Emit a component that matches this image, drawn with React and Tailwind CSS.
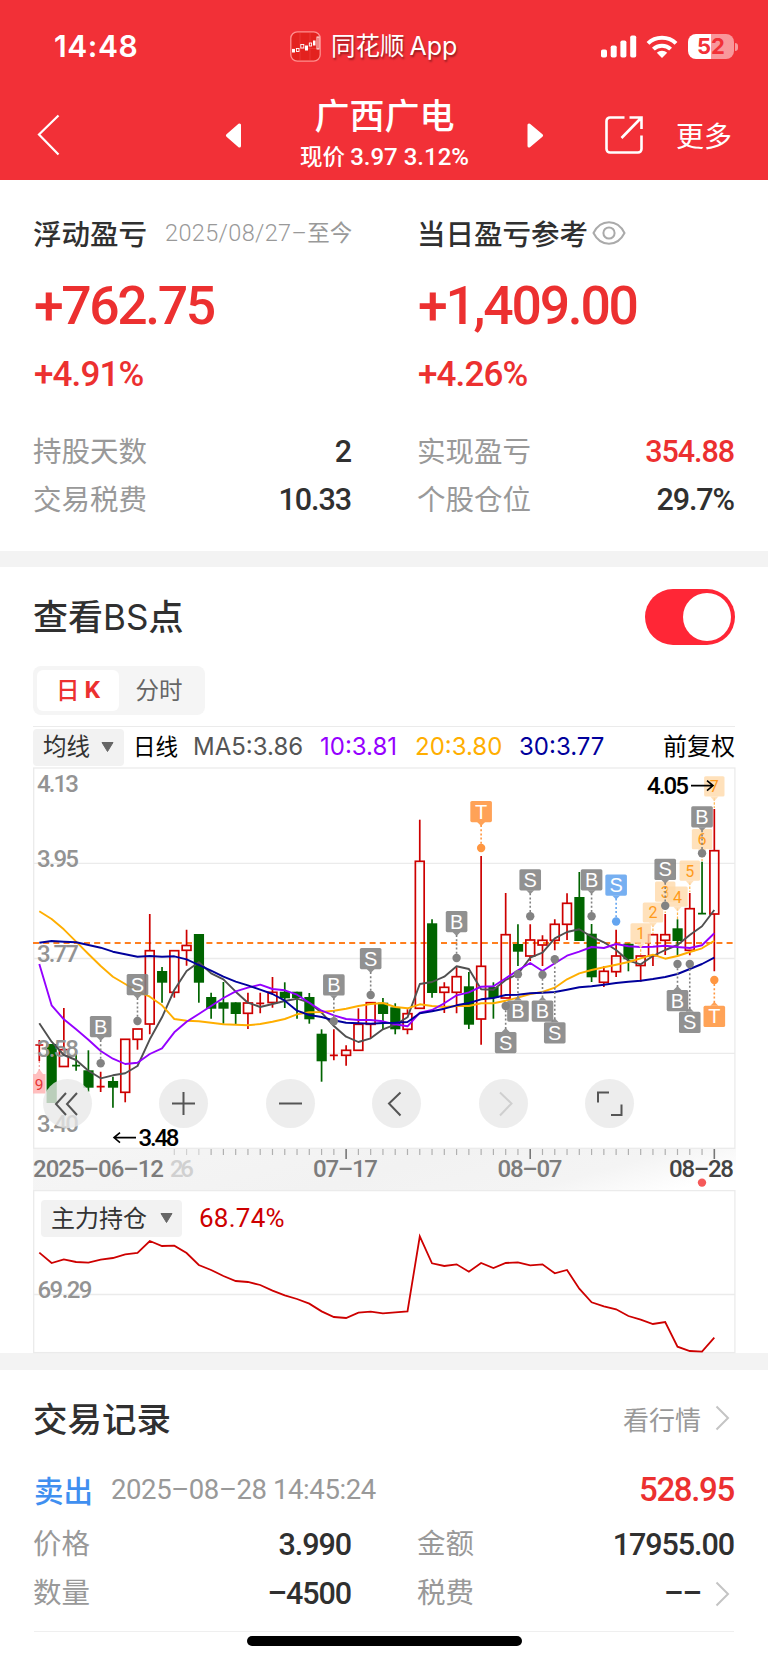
import clsx from 'clsx';

const FIRST_X = 39.3;
const STEP = 12.273;
const xAt = (i) => FIRST_X + STEP * i;

// [high, body top, body bottom, low, 'r' rise | 'g' fall]
const candles = [
  [1040, 1045, 1045, 1061, 'r'],
  [1044, 1044, 1103, 1103, 'g'],
  [1008, 1049.7, 1066.5, 1066.5, 'r'],
  [1051, 1065.7, 1065.7, 1070.7, 'g'],
  [1050.3, 1070.3, 1087.7, 1091.7, 'g'],
  [1071.7, 1086.7, 1086.7, 1092, 'r'],
  [1076.7, 1081, 1087.7, 1107.7, 'g'],
  [1039.3, 1039.3, 1092.3, 1102.3, 'r'],
  [1029, 1029, 1039.3, 1049.7, 'r'],
  [914, 950.7, 1024, 1034.3, 'r'],
  [967, 971, 982.7, 1002.7, 'g'],
  [950.7, 950.7, 992.3, 997.7, 'r'],
  [929.7, 945.5, 950.3, 965.7, 'r'],
  [934, 934, 982.7, 1002.7, 'g'],
  [992.7, 997, 1008.7, 1018.7, 'g'],
  [982, 1002.3, 1008.7, 1023.7, 'g'],
  [1002.3, 1002.3, 1014, 1024, 'g'],
  [992.7, 1003, 1013.3, 1029, 'r'],
  [992.7, 1003.3, 1003.3, 1013.3, 'r'],
  [977, 992.3, 1002.5, 1007.7, 'r'],
  [982.3, 991.7, 998.3, 1008, 'g'],
  [991.7, 991.7, 998, 1018.7, 'g'],
  [993, 997, 1019.3, 1023.7, 'g'],
  [1029.3, 1033.7, 1061.3, 1081.7, 'g'],
  [1029.3, 1055.3, 1055.3, 1060.3, 'r'],
  [1045.3, 1050.3, 1055.3, 1065.7, 'r'],
  [1008.3, 1024.3, 1050.3, 1050.3, 'r'],
  [1002.7, 1002.7, 1024.3, 1038.3, 'r'],
  [998, 1002.7, 1014, 1029.3, 'g'],
  [1003.3, 1007.3, 1029.3, 1034.3, 'g'],
  [1009.3, 1013.7, 1029.3, 1034.3, 'r'],
  [819.7, 861.3, 1008.3, 1008.3, 'r'],
  [919.3, 923.3, 993, 997.7, 'g'],
  [982.3, 987.3, 992.3, 1013, 'r'],
  [967.3, 976.7, 992.3, 1013.3, 'r'],
  [972, 986.3, 1024.7, 1029, 'g'],
  [856, 966.3, 1019, 1044.7, 'r'],
  [982.3, 987, 998, 1018.7, 'g'],
  [893, 934.7, 998, 998, 'r'],
  [924.3, 944, 951.7, 966, 'g'],
  [924.3, 940, 956, 961, 'r'],
  [935.3, 940.3, 945, 966, 'r'],
  [919.3, 924.3, 940.3, 950.3, 'r'],
  [893.3, 903.3, 924.3, 940, 'r'],
  [872, 897, 941, 941, 'g'],
  [924, 933.7, 977.3, 982, 'g'],
  [966.3, 971.3, 982.3, 987, 'r'],
  [929.7, 956, 971.7, 977, 'r'],
  [943.7, 943.7, 959.3, 971.3, 'g'],
  [956, 956, 965.5, 981.7, 'r'],
  [934.7, 934.7, 955.7, 966, 'r'],
  [914, 934.7, 940.3, 955, 'r'],
  [919.3, 928.3, 941, 955, 'g'],
  [893, 908.7, 950.3, 955.3, 'r'],
  [861.7, 913.7, 913.7, 913.7, 'g'],
  [809, 850.7, 914, 971.3, 'r'],
];

const averages = [
  {
    name: 'MA5',
    color: '#505050',
    values: [1023.3, 1041.7, 1055, 1060, 1070.7, 1078.3, 1075.3, 1073.3, 1066, 1039.3, 1017.3, 990, 971, 962.3, 973.3, 979.3, 991.7, 1002.7, 1007, 1004, 1001, 998.7, 1002.7, 1012.7, 1026, 1036.7, 1042, 1038.3, 1029.3, 1024.7, 1017.3, 984, 982, 976.7, 966.3, 969, 989.3, 989.7, 980, 974, 957.7, 952.7, 938.3, 932, 929.3, 936.7, 942.3, 950, 960.7, 964.3, 956, 950, 945, 935, 926.3, 910],
  },
  {
    name: 'MA20',
    color: '#ffae00',
    values: [911.3, 919, 929.3, 941.7, 954, 966, 976.7, 984, 991.3, 996.7, 1005.3, 1019, 1020.7, 1021.3, 1022.7, 1024.3, 1024.7, 1025.3, 1024, 1021.7, 1019, 1014.3, 1012.3, 1012, 1010.7, 1008.7, 1006, 1004, 1003, 1007, 1008.3, 1004.3, 1006, 1007, 1006, 1006, 1003.3, 1003.3, 1000.7, 997.7, 994, 992, 987.7, 979.3, 973.3, 970, 967.3, 964.7, 962, 958.3, 954.7, 958.7, 956, 952, 948.3, 940.7],
  },
  {
    name: 'MA10',
    color: '#9500ff',
    values: [964, 1005.3, 1019.3, 1029.3, 1039.7, 1051, 1058.7, 1064, 1062.7, 1054, 1048.3, 1032.3, 1021.7, 1014, 1006, 998, 991.3, 987.7, 984.7, 989, 990.3, 994.7, 1002.7, 1010.7, 1015.3, 1019, 1020, 1020, 1021.3, 1024.3, 1026.3, 1012.7, 1010, 1003.3, 995.3, 992.3, 986.7, 986.3, 978.3, 970.3, 963, 971, 963.3, 955.7, 951.7, 947, 948, 944, 946.3, 947, 946.7, 945.7, 947, 948, 945.3, 933.3],
  },
  {
    name: 'MA30',
    color: '#00009c',
    values: [942.7, 941, 941.7, 942.3, 945, 947.7, 951.7, 954.3, 956.7, 956, 956.7, 956.3, 959.3, 965, 970.7, 976.7, 981.7, 985.3, 989.7, 994, 1000.7, 1010.7, 1015, 1017, 1020.3, 1022.7, 1023.3, 1023.7, 1023, 1022.7, 1022, 1013.3, 1011.3, 1008.7, 1005.3, 1003, 999.3, 998, 995, 994.7, 993.3, 992.7, 992, 989.7, 987.3, 986.3, 984.7, 983, 981.7, 980.7, 979, 977, 974, 969, 964, 957.7],
  },
];

const GRAY = '#828282';
const ORANGE = '#ff9640';
const BLUE = '#64a5f0';

// i: candle index, y: top of the badge, dot: centre of the anchor dot
const marks = [
  { i: 5, label: 'B', y: 1016, dot: 1063.3 },
  { i: 8, label: 'S', y: 974, dot: 1021 },
  { i: 24, label: 'B', y: 974.3, dot: 1021.3 },
  { i: 27, label: 'S', y: 948, dot: 995 },
  { i: 34, label: 'B', y: 911, dot: 958 },
  { i: 36, label: 'T', y: 801, dot: 848, color: ORANGE },
  { i: 38, label: 'S', y: 1032, dot: 1006 },
  { i: 39, label: 'B', y: 1000.5, dot: 974.3 },
  { i: 40, label: 'S', y: 869.2, dot: 916.3 },
  { i: 41, label: 'B', y: 1000.5, dot: 974.8 },
  { i: 42, label: 'S', y: 1022.2, dot: 959.3 },
  { i: 45, label: 'B', y: 869.2, dot: 916.3 },
  { i: 47, label: 'S', y: 874.5, dot: 921.5, color: BLUE },
  { i: 51, label: 'S', y: 858.8, dot: 905.7 },
  { i: 52, label: 'B', y: 990, dot: 964 },
  { i: 53, label: 'S', y: 1011.8, dot: 964 },
  { i: 54, label: 'B', y: 806.2, dot: 853.3 },
  { i: 55, label: 'T', y: 1005.8, dot: 980, color: ORANGE },
];

const counts = [
  { i: 49, n: 1, y: 923.2, to: 955 },
  { i: 50, n: 2, y: 902.4, to: 934 },
  { i: 51, n: 3, y: 881.6, to: 913 },
  { i: 52, n: 4, y: 886.6, to: 919 },
  { i: 53, n: 5, y: 860.6, to: 892 },
  { i: 54, n: 6, y: 829, to: 861 },
  { i: 55, n: 7, y: 776.2, to: 808 },
];

const holdings = [248, 279, 268, 276, 278, 269, 264, 253, 249, 213, 228, 227, 249, 285, 300, 318, 333, 336, 345, 362, 376, 387, 401, 424, 441, 444, 428, 425, 430, 427, 424, 199, 280, 288, 283, 305, 279, 294, 279, 277, 286, 283, 310, 300, 356, 397, 409, 418, 438, 449, 462, 456, 530, 543, 545, 503];

const toPoints = (values) => values.map((v, i) => `${xAt(i).toFixed(1)},${v}`).join(' ');

function Candle({ index, data }) {
  const [high, top, bottom, low, kind] = data;
  const x = xAt(index);
  const color = kind === 'r' ? '#cd0000' : '#006400';

  if (top === bottom) {
    return (
      <g stroke={color} strokeWidth="1.7">
        <path d={`M${x} ${high}V${low}M${x - 4} ${top}H${x + 4}`} />
      </g>
    );
  }
  if (kind === 'g') {
    return (
      <g>
        <path d={`M${x} ${high}V${low}`} stroke={color} strokeWidth="1.7" />
        <rect x={x - 5} y={top} width="10.2" height={bottom - top} fill={color} />
      </g>
    );
  }
  return (
    <g stroke={color} strokeWidth="1.7" fill="none">
      <path d={`M${x} ${high}V${top}M${x} ${bottom}V${low}`} />
      <rect x={x - 4.4} y={top} width="8.8" height={bottom - top} />
    </g>
  );
}

function Mark({ i, label, y, dot, color = GRAY }) {
  const x = xAt(i);
  const above = dot > y;
  const edge = above ? y + 21 : y;
  const tip = above ? edge + 3 : edge - 3;
  return (
    <g>
      <path d={`M${x} ${tip}V${dot}`} stroke={color} strokeWidth="1.6" strokeDasharray="2 2.2" />
      <circle cx={x} cy={dot} r="4.2" fill={color} />
      <g opacity="0.88">
        <rect x={x - 10.8} y={y} width="21.6" height="21.2" rx="1.6" fill={color} />
        <path d={`M${x - 4} ${edge}L${x} ${tip + (above ? 1 : -1)}L${x + 4} ${edge}Z`} fill={color} />
      </g>
      <text x={x} y={y + 17.6} textAnchor="middle" fontSize="20" fill="#fff">
        {label}
      </text>
    </g>
  );
}

function Count({ i, n, y, to }) {
  const x = xAt(i);
  return (
    <g>
      <path d={`M${x} ${y + 22}V${to}`} stroke="#ffb44c" strokeWidth="1.2" strokeDasharray="2.5 1.5" />
      <rect x={x - 10.2} y={y} width="20.4" height="20.2" rx="1.5" fill="#ffd9a8" opacity="0.78" />
      <path d={`M${x - 4} ${y + 20.2}L${x} ${y + 25}L${x + 4} ${y + 20.2}Z`} fill="#ffd9a8" opacity="0.78" />
      <text x={x} y={y + 16} textAnchor="middle" fontSize="16" fill="#ff9a1a" className="font-[Roboto]">
        {n}
      </text>
    </g>
  );
}

function ToolButton({ children, muted }) {
  return (
    <button className="flex size-[49px] items-center justify-center rounded-full bg-[#e8e8e8]/80 first:mr-[10px]">
      <svg
        width="49"
        height="49"
        viewBox="0 0 49 49"
        fill="none"
        strokeWidth="2"
        className={muted ? 'stroke-[#cfcfcf]' : 'stroke-[#555]'}
      >
        {children}
      </svg>
    </button>
  );
}

function KLineChart() {
  return (
    <div className="relative h-[382px]">
      <svg
        width="703"
        height="382"
        viewBox="33 767 703 382"
        className="block overflow-visible font-['Liberation_Sans']"
      >
        <g stroke="#ebebeb" strokeWidth="1.3" fill="none">
          <rect x="33.7" y="768" width="701.2" height="380.3" />
          <path d="M34 863.3H735M34 958.5H735M34 1053.4H735" />
        </g>
        <path d="M33 943H735" stroke="#ff7f1e" strokeWidth="2" strokeDasharray="6 4.2" />
        {candles.map((data, i) => (
          <Candle key={i} index={i} data={data} />
        ))}
        <g fontSize="24" fill="#939393" fontWeight="500" className="font-[Roboto]">
          <text x="37" y="792" textLength="42">4.13</text>
          <text x="37" y="866.6" textLength="42">3.95</text>
          <text x="37" y="962" textLength="42">3.77</text>
          <text x="37" y="1057" textLength="42">3.58</text>
          <text x="37" y="1132" textLength="42">3.40</text>
        </g>
        <path d="M39.3 1061V1072" stroke="#f29a9a" strokeWidth="1.2" strokeDasharray="2 2" />
        <path d="M33 1074H45.5V1093.4H33ZM36 1074L39.3 1069L43 1074Z" fill="#ffb4b4" opacity="0.85" />
        <text x="39" y="1090" textAnchor="middle" fontSize="15.5" fill="#e83434" className="font-[Roboto]">9</text>
        {averages.map((line) => (
          <polyline
            key={line.name}
            points={toPoints(line.values)}
            fill="none"
            stroke={line.color}
            strokeWidth="1.9"
            strokeLinejoin="round"
          />
        ))}
        {counts.map((count) => (
          <Count key={count.n} {...count} />
        ))}
        {marks.map((mark) => (
          <Mark key={mark.i} {...mark} />
        ))}
        <g fontSize="24" fontWeight="500" fill="#000" className="font-[Roboto]">
          <text x="647" y="794" textLength="42">4.05</text>
          <text x="138.5" y="1145.6" textLength="41">3.48</text>
        </g>
        <g stroke="#000" strokeWidth="1.6" fill="none">
          <path d="M691 785.6H713M707 780.6L713 785.6L707 790.6" />
          <path d="M136 1137.6H114M120 1132.6L114 1137.6L120 1142.6" />
        </g>
      </svg>
      <div className="absolute top-[312px] left-[10px] flex gap-[57.4px]">
        <ToolButton>
          <path d="M23 14L13 25L23 36M34 14L24 25L34 36" />
        </ToolButton>
        <ToolButton>
          <path d="M13 24.5H36M24.5 13V36" />
        </ToolButton>
        <ToolButton>
          <path d="M13 24.5H36" />
        </ToolButton>
        <ToolButton>
          <path d="M28.5 13.5L17 24.5L28.5 36.5" />
        </ToolButton>
        <ToolButton muted>
          <path d="M21 13.5L32.5 24.5L21 36.5" />
        </ToolButton>
        <ToolButton>
          <path d="M13 23.5V13.500H24M26 36H36.5V25.5" />
        </ToolButton>
      </div>
    </div>
  );
}

function DateAxis() {
  const ticks = Array.from({ length: 45 }, (_, k) => k + 11);
  return (
    <svg width="703" height="41" viewBox="33 1149 703 41" className="block font-[Roboto]">
      <defs>
        <linearGradient id="axis" x1="0" x2="1" y1="0.4" y2="0.6">
          <stop offset="0" stopColor="#f5f5f5" />
          <stop offset="0.5" stopColor="#f2f2f2" />
          <stop offset="0.8" stopColor="#f4f4f4" />
          <stop offset="1" stopColor="#fff" />
        </linearGradient>
      </defs>
      <rect x="33" y="1149" width="703" height="41" fill="url(#axis)" />
      {ticks.map((i) => (
        <path
          key={i}
          d={`M${xAt(i)} 1149V${i % 15 === 10 ? 1159 : 1155}`}
          stroke={i % 15 === 10 ? '#777' : i < 14 ? '#d0d0d0' : '#b0b0b0'}
          strokeWidth={i % 15 === 10 ? 1.6 : 1.2}
        />
      ))}
      <g fontSize="24" fontWeight="500" fill="#7c7c7c">
        <text x="33" y="1176.500" textLength="131">2025–06–12</text>
        <text x="170" y="1176.500" textLength="24" fill="#d0d0d0">26</text>
        <text x="313" y="1176.500" textLength="65">07–17</text>
        <text x="497.5" y="1176.500" textLength="65">08–07</text>
        <text x="669" y="1176.500" textLength="65" fill="#444">08–28</text>
      </g>
      <circle cx="702" cy="1182.6" r="4.2" fill="#f55a5a" />
    </svg>
  );
}

function HoldingChart() {
  return (
    <div className="relative h-[164px]">
      <svg width="703" height="164" viewBox="33 1190 703 164" className="block">
        <g stroke="#ebebeb" strokeWidth="1.3" fill="none">
          <rect x="33.7" y="1190.6" width="701.2" height="162" />
          <path d="M34 1294.5H735" />
        </g>
        <text x="37.5" y="1297.6" fontSize="24" fontWeight="500" fill="#939393" textLength="55" className="font-[Roboto]">
          69.29
        </text>
        <polyline
          points={toPoints(holdings.map((v) => 1170 + v / 3))}
          fill="none"
          stroke="#cd0000"
          strokeWidth="1.8"
        />
      </svg>
      <div className="absolute top-2 left-2 flex items-center">
        <div className="flex h-[37px] w-[141px] items-center justify-between rounded bg-[#f2f2f2] pr-[9px] pl-[10px] text-[24px] text-[#333]">
          <span className="mb-[2px]">主力持仓</span>
          <Caret />
        </div>
        <span className="mt-px ml-[17px] font-[Roboto] text-[26px] tracking-[0.01em] text-[#cd0000]">68.74%</span>
      </div>
    </div>
  );
}

function Caret() {
  return (
    <svg width="13" height="10" viewBox="0 0 13 10">
      <path d="M1 0.5H12L6.5 9.5Z" fill="#666" stroke="#666" strokeLinejoin="round" />
    </svg>
  );
}

function Chevron() {
  return (
    <svg width="15" height="26" viewBox="0 0 15 26" fill="none" stroke="#c4c4c4" strokeWidth="2">
      <path d="M1.5 1.5L13 13L1.5 24.5" />
    </svg>
  );
}

function Row({ label, value, red, chevron }) {
  return (
    <div className="flex h-full items-center justify-between">
      <span className="mb-[4px] -ml-px text-[28.5px] text-[#999]">{label}</span>
      <span className="flex items-center gap-[14px]">
        <span
          className={clsx(
            'font-[Roboto] text-[30.5px] font-medium tracking-[-0.035em]',
            red ? 'text-[#ec3030]' : 'text-[#303030]',
          )}
        >
          {value}
        </span>
        {chevron && (
          <span className="mr-[4px]">
            <Chevron />
          </span>
        )}
      </span>
    </div>
  );
}

function AppIcon() {
  return (
    <svg width="31" height="31" viewBox="0 0 31 31" fill="none">
      <rect x="0.8" y="0.8" width="29.4" height="29.4" rx="6.5" fill="#e3221f" stroke="#ff8f8f" strokeWidth="1.3" />
      <path d="M2 17.5H29M10 2V29M20 2V29" stroke="#f04a48" strokeWidth="0.5" />
      <g fill="#fff">
        <rect x="2" y="18" width="3" height="3.5" />
        <rect x="15" y="14.5" width="3" height="5" />
        <rect x="23" y="9.5" width="2.5" height="5" />
      </g>
      <g stroke="#fff" strokeWidth="0.9">
        <rect x="6.5" y="17.5" width="2.5" height="3" />
        <rect x="10.8" y="13.5" width="3" height="3.5" />
        <rect x="19.3" y="12" width="2.3" height="3" />
        <rect x="27" y="6" width="2" height="12" />
      </g>
    </svg>
  );
}

function StatusBar() {
  return (
    <div className="flex h-24 items-center justify-between pr-[30px] pb-[3px] pl-[54px]">
      <span className="w-[236px] font-[Inter] text-[30px] font-semibold tracking-[0.02em]">14:48</span>
      <div className="flex flex-1 items-center gap-[10px]">
        <AppIcon />
        <span className="text-[24.5px] text-shadow-[1px_2px_2px_rgb(0_0_0/0.4)]">
          同花顺<span className="ml-[5px] font-[Inter] text-[25px]">App</span>
        </span>
      </div>
      <div className="flex items-center">
        <svg width="36" height="23" viewBox="0 0 36 23" fill="#fff">
          <rect x="0" y="14.5" width="6" height="8" rx="1.8" />
          <rect x="9.7" y="10.5" width="6" height="12" rx="1.8" />
          <rect x="19.4" y="5.5" width="6" height="17" rx="1.8" />
          <rect x="29.2" y="0.5" width="6" height="22" rx="1.8" />
        </svg>
        <svg width="32" height="24" viewBox="0 0 32 24" fill="none" stroke="#fff" strokeWidth="4" className="ml-[9px]">
          <path d="M2 8.4C9.5 0.8 22.5 0.8 30 8.4" />
          <path d="M7.4 14.2C12 9.6 20 9.6 24.6 14.2" />
          <path d="M16 23L10.8 17.8C13.6 15 18.4 15 21.2 17.8Z" fill="#fff" stroke="none" />
        </svg>
        <div className="ml-[10px] flex h-[25px] w-[46px] items-center justify-center rounded-[8px] bg-linear-to-r from-white from-51% to-white/50 to-51% font-[Inter] text-[22px] font-bold text-[#f23037]">
          52
        </div>
        <div className="ml-px h-[8px] w-[3px] rounded-r-full bg-white/50" />
      </div>
    </div>
  );
}

function NavBar() {
  return (
    <div className="flex h-[84px] items-center">
      <svg width="24" height="42" viewBox="0 0 24 42" fill="none" stroke="#fff" strokeWidth="2.2" className="ml-[36px] mb-[6px]">
        <path d="M22.5 1.5L3 20.5L22.5 40.5" />
      </svg>
      <svg width="17" height="25" viewBox="0 0 17 25" className="ml-[165px] mb-[6px]">
        <path d="M14.5 2V23L2.5 12.5Z" fill="#fff" stroke="#fff" strokeWidth="3" strokeLinejoin="round" />
      </svg>
      <div className="mb-[6px] flex w-[285px] flex-col items-center">
        <span className="text-[35px] leading-[42px] font-medium">广西广电</span>
        <span className="text-[22.5px] leading-[40px] font-medium">
          现价 <span className="font-[Roboto] text-[24px]">3.97 3.12%</span>
        </span>
      </div>
      <svg width="17" height="25" viewBox="0 0 17 25" className="mb-[6px]">
        <path d="M2 2V23L14.5 12.5Z" fill="#fff" stroke="#fff" strokeWidth="3" strokeLinejoin="round" />
      </svg>
      <svg width="38" height="38" viewBox="0 0 38 38" fill="none" stroke="#fff" strokeWidth="2.6" className="ml-[61px] mb-[6px]">
        <path d="M19.5 1.5H5A3.5 3.5 0 0 0 1.5 5V33A3.5 3.5 0 0 0 5 36.5H33A3.5 3.5 0 0 0 36.5 33V19.5" />
        <path d="M24.5 1.5H36.5V13M36 2L16.5 22" />
      </svg>
      <span className="mb-[6px] ml-[33px] text-[28px]">更多</span>
    </div>
  );
}

function ProfitSummary() {
  return (
    <section className="grid h-[371px] grid-cols-[317px_316px] justify-between gap-x-[67px] px-[34px] pt-[29px] whitespace-nowrap text-[#303030]">
      <div>
        <div className="flex h-12 items-center">
          <span className="-ml-px text-[28.5px] font-medium">浮动盈亏</span>
          <span className="ml-[18px] text-[22.5px] text-[#999]">
            <span className="font-[Roboto] text-[23.5px] font-light tracking-[0.015em]">2025/08/27–</span>至今
          </span>
        </div>
        <div className="flex h-[98px] items-center font-[Roboto] text-[53.5px] font-medium tracking-[-0.045em] text-[#ec3030]">+762.75</div>
        <div className="flex h-[40px] items-center font-[Roboto] text-[35px] font-medium tracking-[-0.025em] text-[#ec3030]">+4.91%</div>
        <div className="mt-[33px] h-12">
          <Row label="持股天数" value="2" />
        </div>
        <div className="h-12">
          <Row label="交易税费" value="10.33" />
        </div>
      </div>
      <div>
        <div className="flex h-12 items-center">
          <span className="-ml-px text-[28.5px] font-medium">当日盈亏参考</span>
          <svg width="34" height="24" viewBox="0 0 34 24" fill="none" stroke="#aaa" strokeWidth="2" className="ml-[4px]">
            <path d="M1.5 12C5 5 10.5 1.3 17 1.3S29 5 32.5 12C29 19 23.5 22.7 17 22.7S5 19 1.5 12Z" />
            <circle cx="17" cy="12" r="5.6" />
          </svg>
        </div>
        <div className="flex h-[98px] items-center font-[Roboto] text-[53.5px] font-medium tracking-[-0.042em] text-[#ec3030]">+1,409.00</div>
        <div className="flex h-[40px] items-center font-[Roboto] text-[35px] font-medium tracking-[-0.025em] text-[#ec3030]">+4.26%</div>
        <div className="mt-[33px] h-12">
          <Row label="实现盈亏" value="354.88" red />
        </div>
        <div className="h-12">
          <Row label="个股仓位" value="29.7%" />
        </div>
      </div>
    </section>
  );
}

function ChartSection() {
  return (
    <section className="h-[786px] pl-[33px] text-[#303030]">
      <div className="flex h-[99px] items-center justify-between pr-[33px]">
        <h2 className="text-[35px] font-medium">
          查看<span className="font-[Inter] font-normal">BS</span>点
        </h2>
        <div className="flex h-14 w-[90px] items-center justify-end rounded-[28px] bg-[#ff2636] pr-1">
          <span className="size-12 rounded-full bg-white" />
        </div>
      </div>
      <div className="flex h-[49px] w-[172px] items-center rounded-lg bg-[#f5f5f5] p-1 text-[23.5px]">
        <span className="flex h-full w-[82px] items-center justify-center gap-[5px] rounded-md bg-white pb-px font-medium text-[#ec3030]">
          日<span className="font-[Roboto] text-[24.5px] font-bold">K</span>
        </span>
        <span className="flex-1 pr-[2px] pb-[2px] text-center text-[#666]">分时</span>
      </div>
      <div className="mt-[11px] mr-[33px] flex h-[41px] items-center border-t border-[#ebebeb] font-[Inter,'Noto_Sans_CJK_SC',sans-serif] text-[24px] whitespace-nowrap text-black">
        <span className="flex h-[37px] w-[91px] items-center justify-between rounded bg-[#f2f2f2] pr-[10px] pl-[10px] text-[23.5px] text-[#333]">
          均线
          <Caret />
        </span>
        <span className="ml-[9px] w-[60px] text-[22.5px]">日线</span>
        <span className="w-[127px] text-[#555]">MA5:3.86</span>
        <span className="w-[95px] text-[#9500ff]">10:3.81</span>
        <span className="w-[104px] text-[#ffae00]">20:3.80</span>
        <span className="flex-1 text-[#00009c]">30:3.77</span>
        <span className="text-[24px]">前复权</span>
      </div>
      <KLineChart />
      <DateAxis />
      <HoldingChart />
    </section>
  );
}

function TradeRecords() {
  return (
    <section className="px-[34px] text-[#303030]">
      <div className="flex h-[98px] items-center justify-between pb-[2px]">
        <h2 className="-ml-px text-[34.5px] font-medium">交易记录</h2>
        <span className="mr-[4px] flex items-center gap-[14px] text-[26px] text-[#999]">
          看行情
          <Chevron />
        </span>
      </div>
      <div className="flex h-[44px] items-center">
        <span className="mb-[2px] text-[29.5px] font-medium text-[#3f8ff0]">卖出</span>
        <span className="ml-[18px] font-[Roboto] text-[27.5px] tracking-[-0.015em] text-[#999]">2025–08–28 14:45:24</span>
        <span className="ml-auto font-[Roboto] text-[33px] font-medium tracking-[-0.04em] text-[#ec3030]">528.95</span>
      </div>
      <div className="mt-[8px] grid h-[98px] grid-cols-[317px_316px] grid-rows-2 justify-between">
        <Row label="价格" value="3.990" />
        <Row label="金额" value="17955.00" />
        <Row label="数量" value="–4500" />
        <Row label="税费" value="––" chevron />
      </div>
      <div className="mt-[13px] border-t border-[#efefef]" />
    </section>
  );
}

export default function App() {
  return (
    <div className="h-[1663px] w-[768px] overflow-hidden bg-white font-['Noto_Sans_CJK_SC',sans-serif]">
      <header className="h-[180px] bg-[#f23037] text-white">
        <StatusBar />
        <NavBar />
      </header>
      <ProfitSummary />
      <div className="h-4 bg-[#f3f3f3]" />
      <ChartSection />
      <div className="h-[17px] bg-[#f3f3f3]" />
      <TradeRecords />
      <div className="mx-auto mt-[4px] h-[10px] w-[275px] rounded-full bg-black" />
    </div>
  );
}
